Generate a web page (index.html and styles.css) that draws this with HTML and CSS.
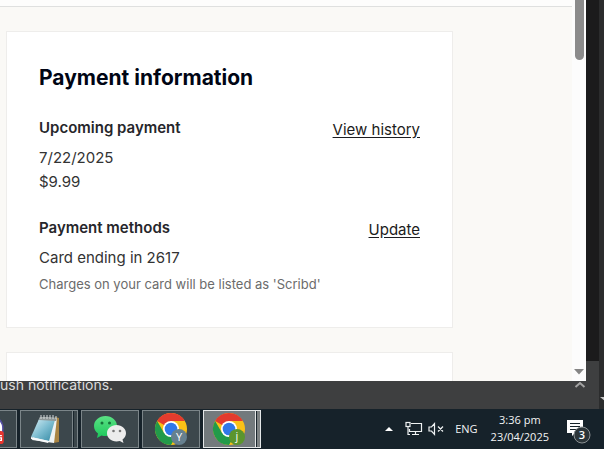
FILE: index.html
```html
<!DOCTYPE html>
<html lang="en">
<head>
  <meta charset="UTF-8" />
  <meta name="viewport" content="width=device-width, initial-scale=1.0"/>
  <title>Payment information</title>
  <link rel="stylesheet" href="styles.css">
</head>
<body>
  <div class="desktop">
    <div class="backdrop">
      <div class="notice">ush notifications.
        <svg class="notice-arrow" width="12" height="8" viewBox="0 0 12 8"><path d="M1.500 6L6 2l4.500 4" fill="none" stroke="#a3a3a3" stroke-width="2"/></svg>
      </div>
    </div>
    <div class="edge">
      <svg width="5" height="6" viewBox="0 0 5 6"><path d="M1 1h5v4z" fill="#c4c4c4"/></svg>
    </div>

    <div class="window">
      <div class="page">
        <div class="page-top"></div>
        <main class="cards">
          <section class="card">
            <h1>Payment information</h1>
            <div class="row">
              <div>
                <h2>Upcoming payment</h2>
                <p>7/22/2025</p>
                <p>$9.99</p>
              </div>
              <a href="#">View history</a>
            </div>
            <div class="row">
              <div>
                <h2>Payment methods</h2>
                <p>Card ending in 2617</p>
                <p class="hint">Charges on your card will be listed as 'Scribd'</p>
              </div>
              <a href="#">Update</a>
            </div>
          </section>
          <section class="card"></section>
        </main>
      </div>
      <div class="scrollbar">
        <div class="thumb"></div>
        <svg width="10" height="6" viewBox="0 0 10 6"><path d="M0 0h10L5 5.500z" fill="#858585"/></svg>
      </div>
    </div>
  </div>

  <footer class="taskbar">
    <div class="apps">
      <button class="app app-cut" aria-label="App">
        <svg width="17" height="36" viewBox="0 0 17 36">
          <circle cx="-8" cy="17" r="11" fill="#fff"/>
          <path d="M-8 5a11 12 0 0 1 11 12v7" fill="none" stroke="#5750a5" stroke-width="1.500"/>
          <rect x="-8" y="20" width="12" height="14" rx="3" fill="#e8352e"/>
          <path d="M2 25h-3v2.500h2.500V30H-1" fill="none" stroke="#fff" stroke-width="1.300"/>
        </svg>
      </button>
      <button class="app stacked" aria-label="Notepad">
        <svg width="34" height="34" viewBox="0 0 34 34">
          <defs>
            <linearGradient id="pad" x1="0" y1="0" x2="1" y2="1">
              <stop offset="0" stop-color="#d8eff5"/>
              <stop offset=".5" stop-color="#7dbdd1"/>
              <stop offset="1" stop-color="#3187a2"/>
            </linearGradient>
          </defs>
          <path d="M26 5l4 1v24l-6 1z" fill="#a98443"/>
          <path d="M11 5l17 1-3 25-22-3z" fill="#eef2f3"/>
          <path d="M10 7l16 1-6 21L2 25z" fill="url(#pad)"/>
          <path d="M2 25l18 4-1 2-17-4z" fill="#f7f9fa"/>
          <path d="M11 5l17 1-1 3-17-1z" fill="#8e9697"/>
          <path d="M12 3v4m3-4v4m3-4v4m3-4v4m3-4v4m3-3v3" stroke="#d5d9da" stroke-width="1"/>
        </svg>
      </button>
      <button class="app" aria-label="WeChat">
        <svg width="34" height="34" viewBox="0 0 34 34">
          <defs>
            <linearGradient id="bubble" x1="0" y1="0" x2="0" y2="1">
              <stop offset="0" stop-color="#5be184"/>
              <stop offset="1" stop-color="#1cc75b"/>
            </linearGradient>
          </defs>
          <path d="M12.500 4C6 4 1 8.500 1 14c0 3 1.500 5.600 4 7.500L4 26l4.500-2.500c1.300.400 2.600.500 4 .500C19 24 24 19.500 24 14S19 4 12.500 4z" fill="url(#bubble)"/>
          <path d="M23.500 13c-5.500 0-9.500 3.700-9.500 8.300s4 8.200 9.500 8.200c1.200 0 2.300-.200 3.300-.500l3.700 2-1-3.500c2.200-1.600 3.500-3.800 3.500-6.200 0-4.600-4-8.300-9.500-8.300z" fill="#ececec"/>
          <g fill="#16743a"><circle cx="9" cy="11" r="1.500"/><circle cx="16.500" cy="11" r="1.500"/></g>
          <g fill="#777"><circle cx="20.500" cy="19" r="1.300"/><circle cx="27" cy="19" r="1.300"/></g>
        </svg>
      </button>
      <button class="app" aria-label="Chrome, profile Y">
        <svg width="34" height="34" viewBox="0 0 34 34">
          <g id="chrome">
            <circle cx="17" cy="17" r="16" fill="#fbc116"/>
            <path d="M17 17L3.140 9A16 16 0 0 1 30.860 9H17z" fill="#e33b2e"/>
            <path d="M3.140 9a16 16 0 0 0 13.860 24l6.930-12L17 17l-6.930 4z" fill="#229a4a"/>
            <circle cx="17" cy="17" r="8" fill="#fff"/>
            <circle cx="17" cy="17" r="6.300" fill="#3078e8"/>
          </g>
          <circle cx="25" cy="25" r="8" fill="#66808f"/>
          <text class="initial" x="25" y="29">Y</text>
        </svg>
      </button>
      <button class="app stacked active" aria-label="Chrome, profile j">
        <svg width="34" height="34" viewBox="0 0 34 34">
          <use href="#chrome"/>
          <circle cx="25" cy="25" r="8" fill="#5b952d"/>
          <text class="initial" x="25" y="28">j</text>
        </svg>
      </button>
    </div>

    <div class="tray">
      <svg class="up" width="8" height="4" viewBox="0 0 8 4"><path d="M0 4l4-4 4 4z" fill="#fff"/></svg>
      <svg width="18" height="16" viewBox="0 0 18 16" fill="none" stroke="#eef1f2" stroke-width="1.200">
        <path d="M6 2.500h10.500v8H4.500V8M10.500 10.500v3M7 13.500h7M3 6v7.500h2"/>
        <rect x="1" y="1.500" width="4" height="4"/>
      </svg>
      <svg width="16" height="16" viewBox="0 0 16 16" fill="none" stroke="#eef1f2" stroke-width="1.200">
        <path d="M1 6h2.500l3-3.500v11L3.500 10H1zM10 5.500l5 5M15 5.500l-5 5"/>
      </svg>
      <span class="lang">ENG</span>
      <div class="clock">
        <span>3:36 pm</span>
        <span>23/04/2025</span>
      </div>
      <button class="messages" aria-label="3 notifications">
        <svg width="26" height="26" viewBox="0 0 26 26">
          <path d="M1 1h16v13H9l-3 3v-3H1z" fill="#fff"/>
          <path d="M4 4.500h10M4 7.500h10M4 10.500h7" stroke="#17232a" stroke-width="1"/>
          <circle cx="16" cy="16" r="8" fill="#2c3539" stroke="#8b9194" stroke-width="1"/>
          <text class="count" x="16" y="20">3</text>
        </svg>
      </button>
    </div>
  </footer>
</body>
</html>
```

FILE: styles.css
```css
* { box-sizing: border-box; }
body { margin: 0; height: 100vh; display: flex; flex-direction: column; overflow: hidden; background: #16222a; font-family: Inter, "Liberation Sans", sans-serif; }
h1, h2, p { margin: 0; }
svg { display: block; }
button { font: inherit; color: inherit; padding: 0; cursor: pointer; }

.desktop { flex: 1; min-height: 0; display: flex; position: relative; background: #2b2b2c; }
.backdrop { flex: 1; display: flex; flex-direction: column; justify-content: flex-end; background: #1b1b1c; }
.notice { display: flex; justify-content: space-between; align-items: center; height: 48px; padding-right: 13px; background: #3e3f40; color: #dcdcdc; font-size: 14px; line-height: 20px; }
.edge { width: 5px; display: flex; flex-direction: column; justify-content: flex-end; padding-bottom: 7px; background: #2b2c2d; }

/* browser window sits over the dark one */
.window { position: absolute; top: 0; right: 18px; bottom: 28px; left: 0; display: flex; overflow: hidden; background: #fff; }
.page { flex: 1; overflow: hidden; background: #faf9f6; }
.page-top { height: 7px; background: #fdfdfc; border-bottom: 1px solid #dfe0df; }
.cards { display: flex; flex-direction: column; gap: 24px; padding: 24px 119px 0 6px; }
.card { min-height: 80px; padding: 32px; background: #fff; border: 1px solid #eeedeb; }
.card h1 { margin-bottom: 24px; font-size: 21px; line-height: 28px; font-weight: 700; color: #000514; }
.row { display: flex; justify-content: space-between; align-items: flex-start; margin-bottom: 22px; color: #333; font-size: 15px; line-height: 24px; }
.row:last-child { margin-bottom: 0; }
.row h2 { margin-bottom: 6px; font-size: 15px; line-height: 24px; font-weight: 600; color: #26262b; }
.row a { margin-top: 2px; color: #1c1c20; text-underline-offset: 2px; }
.row .hint { margin-top: 3px; font-size: 13px; line-height: 22px; color: #6b6b6b; }

.scrollbar { width: 14px; display: flex; flex-direction: column; align-items: center; justify-content: space-between; padding-bottom: 6px; background: #fcfcfc; }
.thumb { width: 9px; height: 60px; border-radius: 0 0 5px 5px; background: #8b8b8b; }

.taskbar { height: 40px; display: flex; justify-content: space-between; background: #16222a; color: #f2f4f5; font-family: "Open Sans", "Noto Sans", sans-serif; }
.apps { display: flex; gap: 3px; padding: 1px 0; }
.app { width: 58px; display: flex; align-items: center; justify-content: center; background: #3c474c; border: 1px solid #7b8589; overflow: hidden; }
.app-cut { width: 17px; border-left: 0; }
.stacked { padding-right: 6px; background: linear-gradient(to left, #3c474c 3px, #1a262d 3px, #1a262d 4px, #7b8589 4px, #7b8589 5px, #3c474c 5px); }
.active { border-color: #e4e7e8; background: linear-gradient(to left, #7c8182 3px, #1a262d 3px, #1a262d 4px, #e4e7e8 4px, #e4e7e8 5px, #737a7d 5px); }
.initial { fill: #fff; font-size: 11px; text-anchor: middle; }

.tray { display: flex; align-items: center; font-size: 11px; }
.up { margin-right: 12px; }
.tray svg + svg { margin-right: 5px; }
.lang { margin: 0 13px 2px 6px; }
.clock { display: flex; flex-direction: column; align-items: center; line-height: 17px; margin-bottom: 2px; }
.messages { margin: 5px 12px 0 17px; background: none; border: 0; }
.count { fill: #fff; font-size: 11px; font-weight: 600; text-anchor: middle; }
```
